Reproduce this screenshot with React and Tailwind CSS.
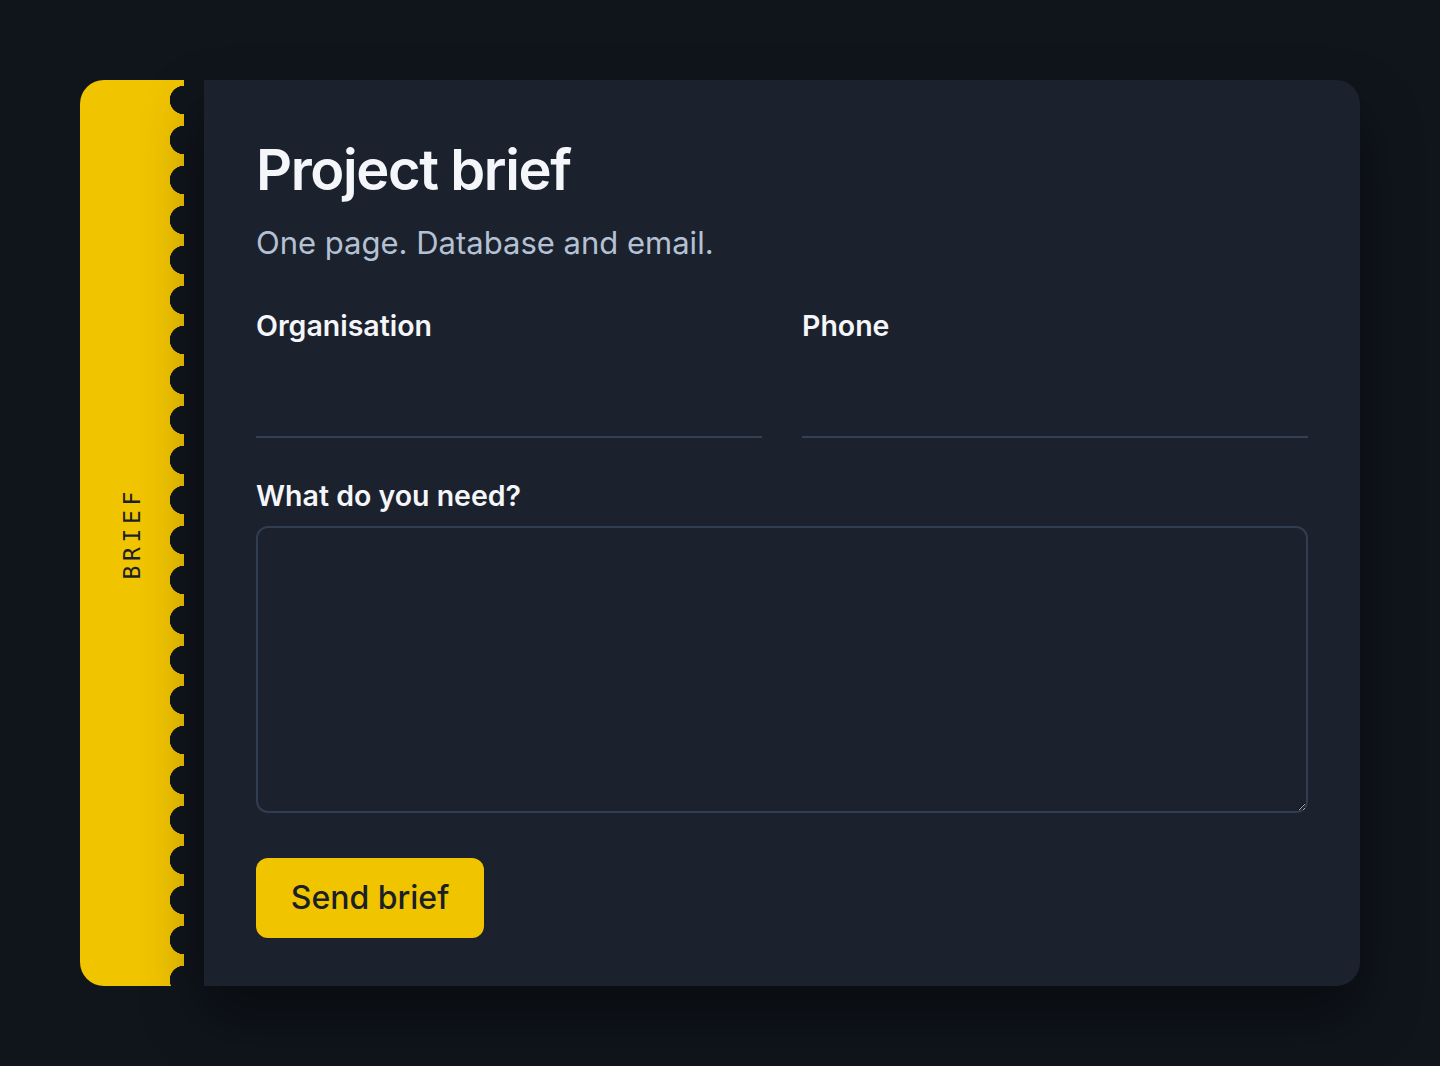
import React from "react";

const Field = ({ label }) => (
  <label className="flex flex-col">
    <span className="text-[28.5px] font-semibold text-[#f4f6fa] leading-[36px]">{label}</span>
    <input
      type="text"
      className="mt-[60px] h-[34px] bg-transparent border-0 border-b-2 border-[#334155] outline-none text-white"
    />
  </label>
);

const App = () => (
  <div className="min-h-screen bg-[#10151c] p-20" style={{ fontFamily: "Inter, 'Noto Sans', sans-serif" }}>
    <div className="flex gap-5 h-[906px]">
      {/* tear-off stub with punched edge */}
      <div className="w-[104px] shrink-0 rounded-l-3xl bg-[#f1c400] bg-[radial-gradient(circle_at_100%_50%,#10151c_14px,transparent_14.5px)] bg-[length:100%_40px] flex items-center justify-center">
        <span
          className="-rotate-90 text-[23px] tracking-[0.2em] text-[#1a1f28] whitespace-nowrap"
          style={{ fontFamily: "'DejaVu Sans Mono', 'Liberation Mono', monospace" }}
        >
          BRIEF
        </span>
      </div>

      <div className="flex-1 rounded-r-3xl bg-[#1c222d] shadow-[0_30px_60px_rgba(0,0,0,0.45)] px-[52px] pt-[58px] pb-12 flex flex-col">
        <h1 className="text-[56px] font-semibold leading-[64px] tracking-tight text-[#f4f6fa]">Project brief</h1>
        <p className="mt-[21px] text-[31px] leading-[40px] text-[#b4c1d4]">One page. Database and email.</p>

        <div className="mt-[45px] grid grid-cols-2 gap-10">
          <Field label="Organisation" />
          <Field label="Phone" />
        </div>

        <label className="mt-[40px] flex flex-col">
          <span className="text-[28.5px] font-semibold text-[#f4f6fa] leading-[36px]">What do you need?</span>
          <textarea className="mt-[12px] h-[287px] rounded-xl border-2 border-[#313d50] bg-transparent outline-none text-white p-4 [color-scheme:dark]" />
        </label>

        <button className="mt-[45px] self-start h-20 w-[228px] rounded-xl bg-[#f1c400] text-[32px] font-medium text-[#1a1f28]">
          Send brief
        </button>
      </div>
    </div>
  </div>
);

export default App;
